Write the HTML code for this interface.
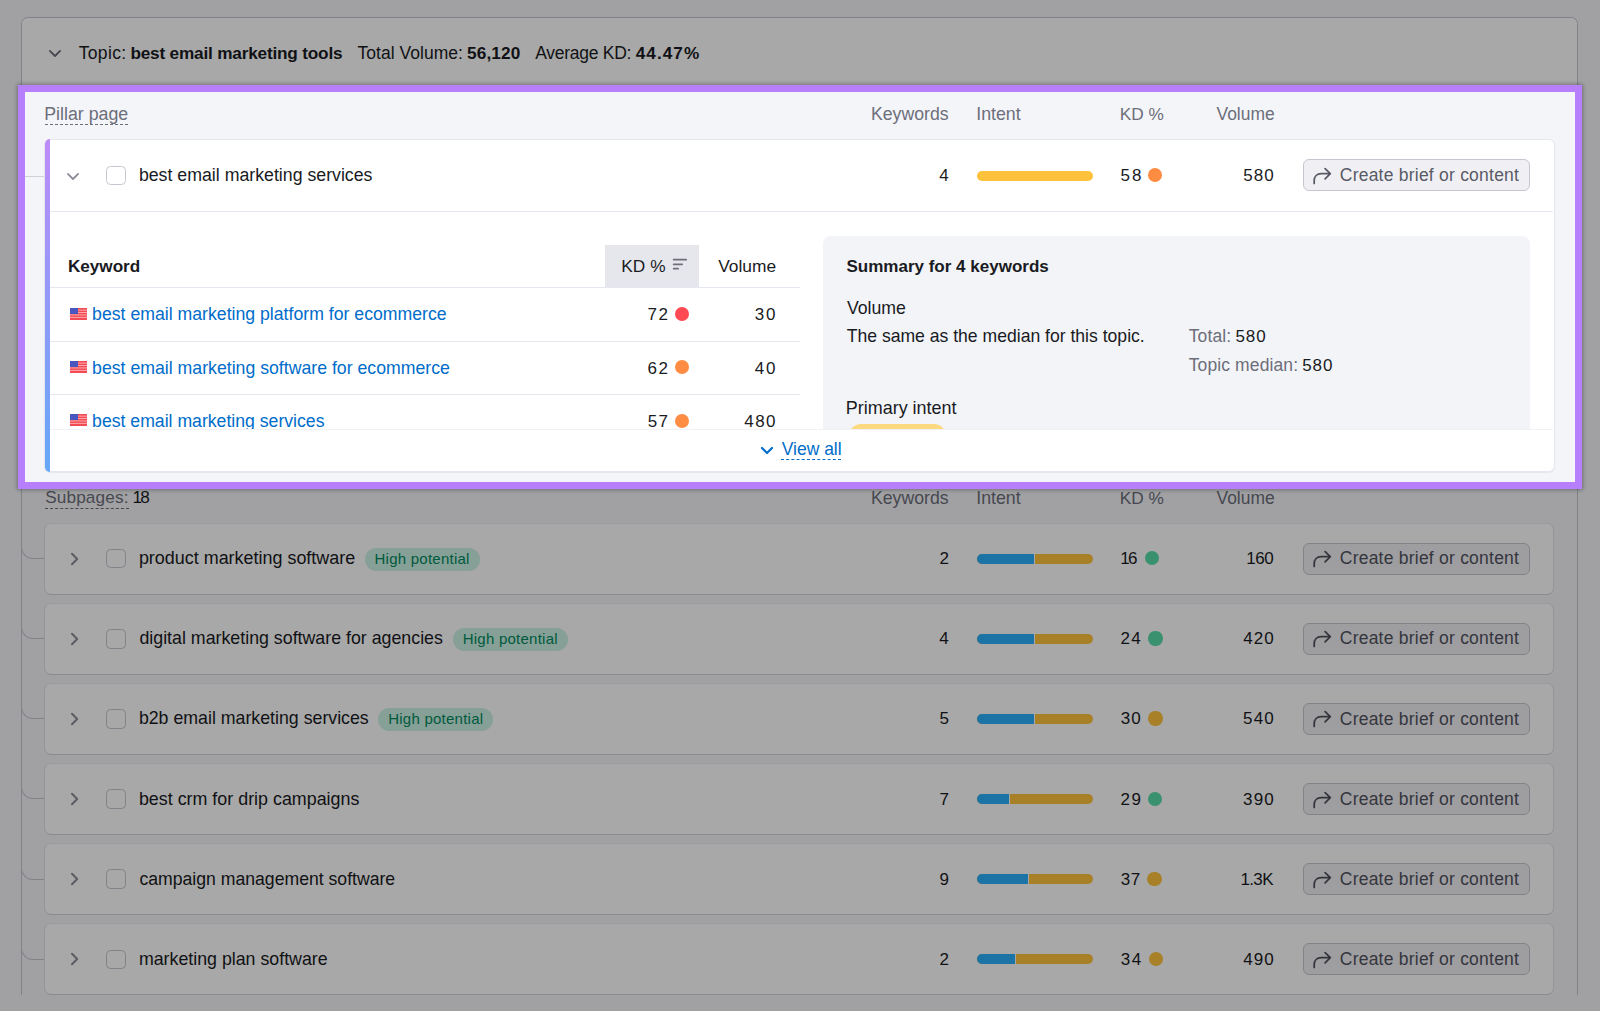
<!DOCTYPE html>
<html><head><meta charset="utf-8"><style>
html,body{margin:0;padding:0;}
body{width:1600px;height:1011px;overflow:hidden;position:relative;background:#f4f5f9;font-family:"Liberation Sans",sans-serif;}
.t{position:absolute;line-height:1;white-space:nowrap;}
.r{position:absolute;}
#ov{position:absolute;left:18px;top:85px;width:1564px;height:404px;box-sizing:border-box;border:7px solid #b77ffb;z-index:5;box-shadow:0 0 0 4000px rgba(0,0,0,0.34),0 0 4px 1px rgba(0,0,0,0.3);}
#hl{position:absolute;left:0;top:0;width:1600px;height:1011px;z-index:6;clip-path:inset(92px 25px 529px 25px);}
</style></head><body>
<div class="r" style="left:21.00px;top:17.00px;width:1557.00px;height:978.00px;box-sizing:border-box;border:1px solid #c4c7cf;border-bottom:none;border-radius:7px 7px 0 0;background:#f4f5f9;"></div>
<div class="r" style="left:22.00px;top:18.00px;width:1555.00px;height:70.00px;background:#fff;border-radius:6px 6px 0 0;"></div>
<svg class="r" style="left:48.00px;top:49.00px;" width="14" height="10" viewBox="0 0 14 10"><path d="M1.9 1.9 L7 7 L12.1 1.9" fill="none" stroke="#6c6e79" stroke-width="1.8" stroke-linecap="round" stroke-linejoin="round"/></svg>
<div class="t" style="left:78.73px;top:45px;font-size:17.50px;color:#191b23;letter-spacing:0.328px;">Topic:</div>
<div class="t" style="left:130.43px;top:45px;font-size:17.20px;color:#191b23;font-weight:700;letter-spacing:-0.188px;">best email marketing tools</div>
<div class="t" style="left:357.43px;top:45px;font-size:17.50px;color:#191b23;letter-spacing:0.041px;">Total Volume:</div>
<div class="t" style="left:467.03px;top:45px;font-size:17.20px;color:#191b23;font-weight:700;letter-spacing:0.132px;">56,120</div>
<div class="t" style="left:535.30px;top:45px;font-size:17.50px;color:#191b23;letter-spacing:-0.282px;">Average KD:</div>
<div class="t" style="left:635.70px;top:45px;font-size:17.20px;color:#191b23;font-weight:700;letter-spacing:1.042px;">44.47%</div>
<div class="t" style="left:45.16px;top:489px;font-size:17.20px;color:#6c6e79;letter-spacing:0.143px;">Subpages:</div>
<div class="r" style="left:45.00px;top:507.50px;width:83.50px;height:1.00px;border-top:1px dashed #6c6e79;box-sizing:border-box;"></div>
<div class="t" style="left:132.53px;top:489px;font-size:17.20px;color:#191b23;letter-spacing:-1.860px;">18</div>
<div class="t" style="left:871.02px;top:490px;font-size:17.66px;color:#6c6e79;">Keywords</div>
<div class="t" style="left:976.21px;top:490px;font-size:17.76px;color:#6c6e79;">Intent</div>
<div class="t" style="left:1119.65px;top:490px;font-size:17.28px;color:#6c6e79;">KD %</div>
<div class="t" style="left:1216.50px;top:490px;font-size:17.45px;color:#6c6e79;">Volume</div>
<div class="r" style="left:21.00px;top:546.60px;width:24.00px;height:12.50px;box-sizing:border-box;border-left:1px solid #c4c7cf;border-bottom:1px solid #c4c7cf;border-bottom-left-radius:12px;"></div>
<div class="r" style="left:44.00px;top:522.60px;width:1510.00px;height:72.00px;box-sizing:border-box;border:1px solid #e0e1e9;border-top-color:#eaebf0;border-bottom-color:#d2d4dc;border-radius:7px;background:#fff;"></div>
<svg class="r" style="left:69.50px;top:551.60px;" width="10" height="14" viewBox="0 0 10 14"><path d="M2 1.8 L7.2 7 L2 12.2" fill="none" stroke="#8b8d98" stroke-width="2" stroke-linecap="round" stroke-linejoin="round"/></svg>
<div class="r" style="left:106.00px;top:548.90px;width:19.50px;height:19.50px;box-sizing:border-box;border:1px solid #c4c7cf;border-radius:4.5px;background:#fff;"></div>
<div class="t" style="left:138.88px;top:550px;font-size:17.94px;color:#191b23;">product marketing software</div>
<div class="r" style="left:364.50px;top:547.60px;width:115.00px;height:23.50px;background:#cbf3e5;border-radius:12px;"></div>
<div class="t" style="left:374.53px;top:551px;font-size:15.00px;color:#008a5e;letter-spacing:0.241px;">High potential</div>
<div class="t" style="left:939.43px;top:550px;font-size:17.00px;color:#191b23;">2</div>
<div class="r" style="left:977.00px;top:553.60px;width:115.50px;height:10.00px;background:#fdc23c;border-radius:5px;"></div>
<div class="r" style="left:977.00px;top:553.60px;width:57.50px;height:10.00px;background:#2ab0fb;border-radius:5px 0 0 5px;border-right:1px solid #fff;box-sizing:border-box;"></div>
<div class="t" style="left:1120.24px;top:550px;font-size:17.00px;color:#191b23;letter-spacing:-1.658px;">16</div>
<div class="r" style="left:1144.65px;top:551.15px;width:14.30px;height:14.30px;background:#59ddaa;border-radius:50%;"></div>
<div class="t" style="left:1246.14px;top:550px;font-size:17.00px;color:#191b23;letter-spacing:-0.389px;">160</div>
<div class="r" style="left:1303.00px;top:542.60px;width:227.00px;height:32.00px;box-sizing:border-box;border:1px solid #c4c7cf;border-radius:6px;background:#f0f0f4;"></div>
<svg class="r" style="left:1313.00px;top:550.20px;overflow:visible;" width="22" height="20" viewBox="0 0 22 20"><path d="M1.2 16.4 V13.8 C1.2 9.6 4 6.7 8.2 6.7 H17.2 M12.1 1.6 L17.3 6.7 L12.1 11.8" fill="none" stroke="#50525e" stroke-width="1.75" stroke-linecap="round" stroke-linejoin="round"/></svg>
<div class="t" style="left:1339.78px;top:550px;font-size:17.50px;color:#50525e;letter-spacing:0.229px;">Create brief or content</div>
<div class="r" style="left:21.00px;top:626.73px;width:24.00px;height:12.50px;box-sizing:border-box;border-left:1px solid #c4c7cf;border-bottom:1px solid #c4c7cf;border-bottom-left-radius:12px;"></div>
<div class="r" style="left:44.00px;top:602.73px;width:1510.00px;height:72.00px;box-sizing:border-box;border:1px solid #e0e1e9;border-top-color:#eaebf0;border-bottom-color:#d2d4dc;border-radius:7px;background:#fff;"></div>
<svg class="r" style="left:69.50px;top:631.73px;" width="10" height="14" viewBox="0 0 10 14"><path d="M2 1.8 L7.2 7 L2 12.2" fill="none" stroke="#8b8d98" stroke-width="2" stroke-linecap="round" stroke-linejoin="round"/></svg>
<div class="r" style="left:106.00px;top:629.03px;width:19.50px;height:19.50px;box-sizing:border-box;border:1px solid #c4c7cf;border-radius:4.5px;background:#fff;"></div>
<div class="t" style="left:139.44px;top:630px;font-size:17.80px;color:#191b23;">digital marketing software for agencies</div>
<div class="r" style="left:452.70px;top:627.73px;width:115.00px;height:23.50px;background:#cbf3e5;border-radius:12px;"></div>
<div class="t" style="left:462.73px;top:631px;font-size:15.00px;color:#008a5e;letter-spacing:0.241px;">High potential</div>
<div class="t" style="left:939.17px;top:630px;font-size:17.00px;color:#191b23;">4</div>
<div class="r" style="left:977.00px;top:633.73px;width:115.50px;height:10.00px;background:#fdc23c;border-radius:5px;"></div>
<div class="r" style="left:977.00px;top:633.73px;width:57.50px;height:10.00px;background:#2ab0fb;border-radius:5px 0 0 5px;border-right:1px solid #fff;box-sizing:border-box;"></div>
<div class="t" style="left:1120.50px;top:630px;font-size:17.00px;color:#191b23;letter-spacing:1.411px;">24</div>
<div class="r" style="left:1148.25px;top:631.28px;width:14.30px;height:14.30px;background:#59ddaa;border-radius:50%;"></div>
<div class="t" style="left:1243.33px;top:630px;font-size:17.00px;color:#191b23;letter-spacing:1.013px;">420</div>
<div class="r" style="left:1303.00px;top:622.73px;width:227.00px;height:32.00px;box-sizing:border-box;border:1px solid #c4c7cf;border-radius:6px;background:#f0f0f4;"></div>
<svg class="r" style="left:1313.00px;top:630.33px;overflow:visible;" width="22" height="20" viewBox="0 0 22 20"><path d="M1.2 16.4 V13.8 C1.2 9.6 4 6.7 8.2 6.7 H17.2 M12.1 1.6 L17.3 6.7 L12.1 11.8" fill="none" stroke="#50525e" stroke-width="1.75" stroke-linecap="round" stroke-linejoin="round"/></svg>
<div class="t" style="left:1339.78px;top:630px;font-size:17.50px;color:#50525e;letter-spacing:0.229px;">Create brief or content</div>
<div class="r" style="left:21.00px;top:706.86px;width:24.00px;height:12.50px;box-sizing:border-box;border-left:1px solid #c4c7cf;border-bottom:1px solid #c4c7cf;border-bottom-left-radius:12px;"></div>
<div class="r" style="left:44.00px;top:682.86px;width:1510.00px;height:72.00px;box-sizing:border-box;border:1px solid #e0e1e9;border-top-color:#eaebf0;border-bottom-color:#d2d4dc;border-radius:7px;background:#fff;"></div>
<svg class="r" style="left:69.50px;top:711.86px;" width="10" height="14" viewBox="0 0 10 14"><path d="M2 1.8 L7.2 7 L2 12.2" fill="none" stroke="#8b8d98" stroke-width="2" stroke-linecap="round" stroke-linejoin="round"/></svg>
<div class="r" style="left:106.00px;top:709.16px;width:19.50px;height:19.50px;box-sizing:border-box;border:1px solid #c4c7cf;border-radius:4.5px;background:#fff;"></div>
<div class="t" style="left:138.89px;top:710px;font-size:17.75px;color:#191b23;">b2b email marketing services</div>
<div class="r" style="left:378.20px;top:707.86px;width:115.00px;height:23.50px;background:#cbf3e5;border-radius:12px;"></div>
<div class="t" style="left:388.23px;top:711px;font-size:15.00px;color:#008a5e;letter-spacing:0.241px;">High potential</div>
<div class="t" style="left:939.43px;top:710px;font-size:17.00px;color:#191b23;">5</div>
<div class="r" style="left:977.00px;top:713.86px;width:115.50px;height:10.00px;background:#fdc23c;border-radius:5px;"></div>
<div class="r" style="left:977.00px;top:713.86px;width:57.50px;height:10.00px;background:#2ab0fb;border-radius:5px 0 0 5px;border-right:1px solid #fff;box-sizing:border-box;"></div>
<div class="t" style="left:1120.77px;top:710px;font-size:17.00px;color:#191b23;letter-spacing:1.145px;">30</div>
<div class="r" style="left:1148.25px;top:711.41px;width:14.30px;height:14.30px;background:#fdc23c;border-radius:50%;"></div>
<div class="t" style="left:1243.07px;top:710px;font-size:17.00px;color:#191b23;letter-spacing:1.145px;">540</div>
<div class="r" style="left:1303.00px;top:702.86px;width:227.00px;height:32.00px;box-sizing:border-box;border:1px solid #c4c7cf;border-radius:6px;background:#f0f0f4;"></div>
<svg class="r" style="left:1313.00px;top:710.46px;overflow:visible;" width="22" height="20" viewBox="0 0 22 20"><path d="M1.2 16.4 V13.8 C1.2 9.6 4 6.7 8.2 6.7 H17.2 M12.1 1.6 L17.3 6.7 L12.1 11.8" fill="none" stroke="#50525e" stroke-width="1.75" stroke-linecap="round" stroke-linejoin="round"/></svg>
<div class="t" style="left:1339.78px;top:711px;font-size:17.50px;color:#50525e;letter-spacing:0.229px;">Create brief or content</div>
<div class="r" style="left:21.00px;top:786.99px;width:24.00px;height:12.50px;box-sizing:border-box;border-left:1px solid #c4c7cf;border-bottom:1px solid #c4c7cf;border-bottom-left-radius:12px;"></div>
<div class="r" style="left:44.00px;top:762.99px;width:1510.00px;height:72.00px;box-sizing:border-box;border:1px solid #e0e1e9;border-top-color:#eaebf0;border-bottom-color:#d2d4dc;border-radius:7px;background:#fff;"></div>
<svg class="r" style="left:69.50px;top:791.99px;" width="10" height="14" viewBox="0 0 10 14"><path d="M2 1.8 L7.2 7 L2 12.2" fill="none" stroke="#8b8d98" stroke-width="2" stroke-linecap="round" stroke-linejoin="round"/></svg>
<div class="r" style="left:106.00px;top:789.29px;width:19.50px;height:19.50px;box-sizing:border-box;border:1px solid #c4c7cf;border-radius:4.5px;background:#fff;"></div>
<div class="t" style="left:138.88px;top:791px;font-size:17.89px;color:#191b23;">best crm for drip campaigns</div>
<div class="t" style="left:939.43px;top:791px;font-size:17.00px;color:#191b23;">7</div>
<div class="r" style="left:977.00px;top:793.99px;width:115.50px;height:10.00px;background:#fdc23c;border-radius:5px;"></div>
<div class="r" style="left:977.00px;top:793.99px;width:33.00px;height:10.00px;background:#2ab0fb;border-radius:5px 0 0 5px;border-right:1px solid #fff;box-sizing:border-box;"></div>
<div class="t" style="left:1120.50px;top:791px;font-size:17.00px;color:#191b23;letter-spacing:1.477px;">29</div>
<div class="r" style="left:1148.05px;top:791.54px;width:14.30px;height:14.30px;background:#59ddaa;border-radius:50%;"></div>
<div class="t" style="left:1243.07px;top:791px;font-size:17.00px;color:#191b23;letter-spacing:1.145px;">390</div>
<div class="r" style="left:1303.00px;top:782.99px;width:227.00px;height:32.00px;box-sizing:border-box;border:1px solid #c4c7cf;border-radius:6px;background:#f0f0f4;"></div>
<svg class="r" style="left:1313.00px;top:790.59px;overflow:visible;" width="22" height="20" viewBox="0 0 22 20"><path d="M1.2 16.4 V13.8 C1.2 9.6 4 6.7 8.2 6.7 H17.2 M12.1 1.6 L17.3 6.7 L12.1 11.8" fill="none" stroke="#50525e" stroke-width="1.75" stroke-linecap="round" stroke-linejoin="round"/></svg>
<div class="t" style="left:1339.78px;top:791px;font-size:17.50px;color:#50525e;letter-spacing:0.229px;">Create brief or content</div>
<div class="r" style="left:21.00px;top:867.12px;width:24.00px;height:12.50px;box-sizing:border-box;border-left:1px solid #c4c7cf;border-bottom:1px solid #c4c7cf;border-bottom-left-radius:12px;"></div>
<div class="r" style="left:44.00px;top:843.12px;width:1510.00px;height:72.00px;box-sizing:border-box;border:1px solid #e0e1e9;border-top-color:#eaebf0;border-bottom-color:#d2d4dc;border-radius:7px;background:#fff;"></div>
<svg class="r" style="left:69.50px;top:872.12px;" width="10" height="14" viewBox="0 0 10 14"><path d="M2 1.8 L7.2 7 L2 12.2" fill="none" stroke="#8b8d98" stroke-width="2" stroke-linecap="round" stroke-linejoin="round"/></svg>
<div class="r" style="left:106.00px;top:869.42px;width:19.50px;height:19.50px;box-sizing:border-box;border:1px solid #c4c7cf;border-radius:4.5px;background:#fff;"></div>
<div class="t" style="left:139.45px;top:871px;font-size:17.64px;color:#191b23;">campaign management software</div>
<div class="t" style="left:939.43px;top:871px;font-size:17.00px;color:#191b23;">9</div>
<div class="r" style="left:977.00px;top:874.12px;width:115.50px;height:10.00px;background:#fdc23c;border-radius:5px;"></div>
<div class="r" style="left:977.00px;top:874.12px;width:52.00px;height:10.00px;background:#2ab0fb;border-radius:5px 0 0 5px;border-right:1px solid #fff;box-sizing:border-box;"></div>
<div class="t" style="left:1120.77px;top:871px;font-size:17.00px;color:#191b23;letter-spacing:0.511px;">37</div>
<div class="r" style="left:1147.35px;top:871.67px;width:14.30px;height:14.30px;background:#fdc23c;border-radius:50%;"></div>
<div class="t" style="left:1240.44px;top:871px;font-size:17.00px;color:#191b23;letter-spacing:-0.642px;">1.3K</div>
<div class="r" style="left:1303.00px;top:863.12px;width:227.00px;height:32.00px;box-sizing:border-box;border:1px solid #c4c7cf;border-radius:6px;background:#f0f0f4;"></div>
<svg class="r" style="left:1313.00px;top:870.72px;overflow:visible;" width="22" height="20" viewBox="0 0 22 20"><path d="M1.2 16.4 V13.8 C1.2 9.6 4 6.7 8.2 6.7 H17.2 M12.1 1.6 L17.3 6.7 L12.1 11.8" fill="none" stroke="#50525e" stroke-width="1.75" stroke-linecap="round" stroke-linejoin="round"/></svg>
<div class="t" style="left:1339.78px;top:871px;font-size:17.50px;color:#50525e;letter-spacing:0.229px;">Create brief or content</div>
<div class="r" style="left:21.00px;top:947.25px;width:24.00px;height:12.50px;box-sizing:border-box;border-left:1px solid #c4c7cf;border-bottom:1px solid #c4c7cf;border-bottom-left-radius:12px;"></div>
<div class="r" style="left:44.00px;top:923.25px;width:1510.00px;height:72.00px;box-sizing:border-box;border:1px solid #e0e1e9;border-top-color:#eaebf0;border-bottom-color:#d2d4dc;border-radius:7px;background:#fff;"></div>
<svg class="r" style="left:69.50px;top:952.25px;" width="10" height="14" viewBox="0 0 10 14"><path d="M2 1.8 L7.2 7 L2 12.2" fill="none" stroke="#8b8d98" stroke-width="2" stroke-linecap="round" stroke-linejoin="round"/></svg>
<div class="r" style="left:106.00px;top:949.55px;width:19.50px;height:19.50px;box-sizing:border-box;border:1px solid #c4c7cf;border-radius:4.5px;background:#fff;"></div>
<div class="t" style="left:138.89px;top:951px;font-size:17.80px;color:#191b23;">marketing plan software</div>
<div class="t" style="left:939.43px;top:951px;font-size:17.00px;color:#191b23;">2</div>
<div class="r" style="left:977.00px;top:954.25px;width:115.50px;height:10.00px;background:#fdc23c;border-radius:5px;"></div>
<div class="r" style="left:977.00px;top:954.25px;width:38.50px;height:10.00px;background:#2ab0fb;border-radius:5px 0 0 5px;border-right:1px solid #fff;box-sizing:border-box;"></div>
<div class="t" style="left:1120.77px;top:951px;font-size:17.00px;color:#191b23;letter-spacing:1.545px;">34</div>
<div class="r" style="left:1148.65px;top:951.80px;width:14.30px;height:14.30px;background:#fdc23c;border-radius:50%;"></div>
<div class="t" style="left:1243.33px;top:951px;font-size:17.00px;color:#191b23;letter-spacing:1.013px;">490</div>
<div class="r" style="left:1303.00px;top:943.25px;width:227.00px;height:32.00px;box-sizing:border-box;border:1px solid #c4c7cf;border-radius:6px;background:#f0f0f4;"></div>
<svg class="r" style="left:1313.00px;top:950.85px;overflow:visible;" width="22" height="20" viewBox="0 0 22 20"><path d="M1.2 16.4 V13.8 C1.2 9.6 4 6.7 8.2 6.7 H17.2 M12.1 1.6 L17.3 6.7 L12.1 11.8" fill="none" stroke="#50525e" stroke-width="1.75" stroke-linecap="round" stroke-linejoin="round"/></svg>
<div class="t" style="left:1339.78px;top:951px;font-size:17.50px;color:#50525e;letter-spacing:0.229px;">Create brief or content</div>
<div id="ov"></div>
<div id="hl">
<div class="r" style="left:25.00px;top:92.00px;width:1550.00px;height:389.00px;background:#f4f5f9;"></div>
<div class="t" style="left:44.21px;top:106px;font-size:17.78px;color:#6c6e79;">Pillar page</div>
<div class="r" style="left:45.00px;top:124.00px;width:83.00px;height:1.00px;border-top:1px dashed #6c6e79;box-sizing:border-box;"></div>
<div class="t" style="left:871.02px;top:106px;font-size:17.66px;color:#6c6e79;">Keywords</div>
<div class="t" style="left:976.21px;top:106px;font-size:17.76px;color:#6c6e79;">Intent</div>
<div class="t" style="left:1119.65px;top:106px;font-size:17.28px;color:#6c6e79;">KD %</div>
<div class="t" style="left:1216.50px;top:106px;font-size:17.45px;color:#6c6e79;">Volume</div>
<div class="r" style="left:25.00px;top:176.00px;width:19.00px;height:1.00px;background:#cfd2d9;"></div>
<div class="r" style="left:44.00px;top:139.00px;width:1511.00px;height:332.50px;box-sizing:border-box;border:1px solid #e6e7ee;border-radius:6px;background:#fff;box-shadow:0 1px 1px rgba(0,0,0,0.06);"></div>
<div class="r" style="left:45.00px;top:139.00px;width:5.00px;height:332.50px;background:linear-gradient(#bd8bfa,#64a8f8);border-radius:6px 0 0 6px;"></div>
<svg class="r" style="left:66.00px;top:172.00px;" width="14" height="10" viewBox="0 0 14 10"><path d="M1.9 1.9 L7 7 L12.1 1.9" fill="none" stroke="#8b8d98" stroke-width="1.8" stroke-linecap="round" stroke-linejoin="round"/></svg>
<div class="r" style="left:106.00px;top:165.70px;width:19.50px;height:19.50px;box-sizing:border-box;border:1px solid #c4c7cf;border-radius:4.5px;background:#fff;"></div>
<div class="t" style="left:138.89px;top:167px;font-size:17.74px;color:#191b23;">best email marketing services</div>
<div class="t" style="left:939.17px;top:167px;font-size:17.00px;color:#191b23;">4</div>
<div class="r" style="left:977.00px;top:170.50px;width:115.50px;height:10.00px;background:#fdc23c;border-radius:5px;"></div>
<div class="t" style="left:1120.47px;top:167px;font-size:17.00px;color:#191b23;letter-spacing:2.011px;">58</div>
<div class="r" style="left:1148.05px;top:168.15px;width:14.30px;height:14.30px;background:#ff8c43;border-radius:50%;"></div>
<div class="t" style="left:1243.27px;top:167px;font-size:17.00px;color:#191b23;letter-spacing:1.045px;">580</div>
<div class="r" style="left:1303.00px;top:159.30px;width:227.00px;height:32.00px;box-sizing:border-box;border:1px solid #c4c7cf;border-radius:6px;background:#f0f0f4;"></div>
<svg class="r" style="left:1313.00px;top:166.90px;overflow:visible;" width="22" height="20" viewBox="0 0 22 20"><path d="M1.2 16.4 V13.8 C1.2 9.6 4 6.7 8.2 6.7 H17.2 M12.1 1.6 L17.3 6.7 L12.1 11.8" fill="none" stroke="#585a66" stroke-width="1.75" stroke-linecap="round" stroke-linejoin="round"/></svg>
<div class="t" style="left:1339.78px;top:167px;font-size:17.50px;color:#585a66;letter-spacing:0.229px;">Create brief or content</div>
<div class="r" style="left:50.00px;top:210.50px;width:1503.00px;height:1.00px;background:#e6e7ee;"></div>
<div class="t" style="left:67.93px;top:258px;font-size:17.14px;color:#191b23;font-weight:700;">Keyword</div>
<div class="r" style="left:605.00px;top:245.00px;width:94.00px;height:42.50px;background:#e6e7ed;"></div>
<div class="t" style="left:621.35px;top:258px;font-size:17.28px;color:#191b23;">KD %</div>
<svg class="r" style="left:672.00px;top:258.00px;" width="16" height="12" viewBox="0 0 16 12"><rect x="0.8" y="0.8" width="14.2" height="1.8" rx="0.9" fill="#6c6e79"/><rect x="0.8" y="5.4" width="10.2" height="1.8" rx="0.9" fill="#6c6e79"/><rect x="0.8" y="9.8" width="6.2" height="1.8" rx="0.9" fill="#6c6e79"/></svg>
<div class="t" style="left:718.20px;top:258px;font-size:17.36px;color:#191b23;">Volume</div>
<div class="r" style="left:50.00px;top:287.00px;width:750.00px;height:1.00px;background:#e6e7ee;"></div>
<svg class="r" style="left:69.50px;top:307.80px;" width="17" height="12" viewBox="0 0 17 12"><rect width="17" height="12" fill="#f24b53"/><rect y="1.7" width="17" height="0.9" fill="#ffb3b6"/><rect y="4.1" width="17" height="0.9" fill="#ffb3b6"/><rect y="6.5" width="17" height="0.9" fill="#ffb3b6"/><rect y="8.9" width="17" height="0.9" fill="#ffb3b6"/><rect width="8" height="6" fill="#4a56c0"/></svg>
<div class="t" style="left:92.09px;top:306px;font-size:17.68px;color:#006dca;">best email marketing platform for ecommerce</div>
<div class="t" style="left:647.50px;top:306px;font-size:17.00px;color:#191b23;letter-spacing:1.477px;">72</div>
<div class="r" style="left:675.30px;top:307.00px;width:14.00px;height:14.00px;background:#ff4953;border-radius:50%;"></div>
<div class="t" style="left:754.77px;top:306px;font-size:17.00px;color:#191b23;letter-spacing:1.845px;">30</div>
<div class="r" style="left:50.00px;top:340.60px;width:750.00px;height:1.00px;background:#e6e7ee;"></div>
<svg class="r" style="left:69.50px;top:361.10px;" width="17" height="12" viewBox="0 0 17 12"><rect width="17" height="12" fill="#f24b53"/><rect y="1.7" width="17" height="0.9" fill="#ffb3b6"/><rect y="4.1" width="17" height="0.9" fill="#ffb3b6"/><rect y="6.5" width="17" height="0.9" fill="#ffb3b6"/><rect y="8.9" width="17" height="0.9" fill="#ffb3b6"/><rect width="8" height="6" fill="#4a56c0"/></svg>
<div class="t" style="left:92.09px;top:360px;font-size:17.70px;color:#006dca;">best email marketing software for ecommerce</div>
<div class="t" style="left:647.50px;top:360px;font-size:17.00px;color:#191b23;letter-spacing:1.477px;">62</div>
<div class="r" style="left:675.30px;top:360.30px;width:14.00px;height:14.00px;background:#ff8c43;border-radius:50%;"></div>
<div class="t" style="left:754.83px;top:360px;font-size:17.00px;color:#191b23;letter-spacing:1.780px;">40</div>
<div class="r" style="left:50.00px;top:393.90px;width:750.00px;height:1.00px;background:#e6e7ee;"></div>
<svg class="r" style="left:69.50px;top:414.40px;" width="17" height="12" viewBox="0 0 17 12"><rect width="17" height="12" fill="#f24b53"/><rect y="1.7" width="17" height="0.9" fill="#ffb3b6"/><rect y="4.1" width="17" height="0.9" fill="#ffb3b6"/><rect y="6.5" width="17" height="0.9" fill="#ffb3b6"/><rect y="8.9" width="17" height="0.9" fill="#ffb3b6"/><rect width="8" height="6" fill="#4a56c0"/></svg>
<div class="t" style="left:92.10px;top:413px;font-size:17.65px;color:#006dca;">best email marketing services</div>
<div class="t" style="left:647.77px;top:413px;font-size:17.00px;color:#191b23;letter-spacing:1.211px;">57</div>
<div class="r" style="left:675.30px;top:413.60px;width:14.00px;height:14.00px;background:#ff8c43;border-radius:50%;"></div>
<div class="t" style="left:744.23px;top:413px;font-size:17.00px;color:#191b23;letter-spacing:1.463px;">480</div>
<div class="r" style="left:823.00px;top:235.60px;width:707.00px;height:193.00px;background:#f3f4f8;border-radius:8px 8px 0 0;"></div>
<div class="t" style="left:846.43px;top:258px;font-size:17.02px;color:#191b23;font-weight:700;">Summary for 4 keywords</div>
<div class="t" style="left:846.90px;top:300px;font-size:17.69px;color:#191b23;">Volume</div>
<div class="t" style="left:846.73px;top:328px;font-size:17.59px;color:#191b23;">The same as the median for this topic.</div>
<div class="t" style="left:1188.73px;top:328px;font-size:17.50px;color:#6c6e79;letter-spacing:0.105px;">Total:</div>
<div class="t" style="left:1235.47px;top:328px;font-size:17.00px;color:#191b23;letter-spacing:0.895px;">580</div>
<div class="t" style="left:1188.73px;top:357px;font-size:17.50px;color:#6c6e79;letter-spacing:0.115px;">Topic median:</div>
<div class="t" style="left:1302.27px;top:357px;font-size:17.00px;color:#191b23;letter-spacing:0.895px;">580</div>
<div class="t" style="left:845.80px;top:400px;font-size:17.97px;color:#191b23;">Primary intent</div>
<div class="r" style="left:849.00px;top:424.20px;width:97.00px;height:24.00px;background:#fcd97f;border-radius:12px;"></div>
<div class="r" style="left:50.00px;top:428.50px;width:1503.00px;height:42.50px;background:#fff;border-top:1px solid #f2f2f6;box-sizing:border-box;border-radius:0 0 6px 0;"></div>
<svg class="r" style="left:760.00px;top:446.00px;" width="14" height="10" viewBox="0 0 14 10"><path d="M2 2 L7 7 L12 2" fill="none" stroke="#006dca" stroke-width="2.2" stroke-linecap="round" stroke-linejoin="round"/></svg>
<div class="t" style="left:781.70px;top:441px;font-size:17.49px;color:#006dca;">View all</div>
<div class="r" style="left:781.00px;top:459.20px;width:60.00px;height:1.00px;border-top:1px dashed #006dca;box-sizing:border-box;"></div>
</div>

</body></html>
